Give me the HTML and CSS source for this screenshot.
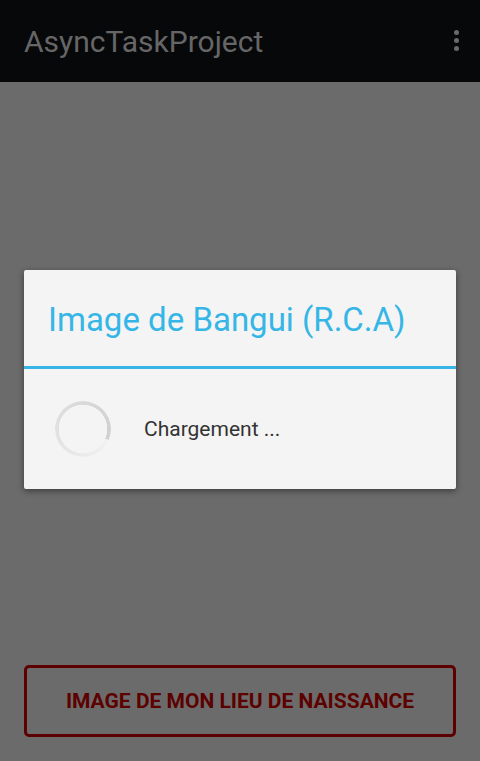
FILE: index.html
```html
<!DOCTYPE html>
<html>
<head>
<meta charset="utf-8">
<link rel="stylesheet" href="styles.css">
</head>
<body>
<div class="screen">
  <header class="actionbar">
    <span class="app-title">AsyncTaskProject</span>
    <span class="overflow"><i></i><i></i><i></i></span>
  </header>
  <main class="content">
    <div class="dialog">
      <div class="dialog-title">Image de Bangui (R.C.A)</div>
      <div class="dialog-divider"></div>
      <div class="dialog-body">
        <div class="spinner-box"><div class="spinner"></div></div>
        <span class="message">Chargement ...</span>
      </div>
    </div>
    <button class="btn">IMAGE DE MON LIEU DE NAISSANCE</button>
  </main>
</div>
</body>
</html>
```
FILE: styles.css
```css
html, body {
  margin: 0;
  padding: 0;
}
body {
  width: 480px;
  height: 761px;
  overflow: hidden;
  font-family: Roboto, "Liberation Sans", sans-serif;
  background: #6b6b6b;
}
.screen {
  display: flex;
  flex-direction: column;
  height: 761px;
}
.actionbar {
  height: 82px;
  background: #07080a;
  display: flex;
  align-items: center;
  justify-content: space-between;
  padding: 0 25px 0 24px;
  box-sizing: border-box;
}
.app-title {
  color: #666666;
  font-size: 30px;
}
.overflow {
  display: flex;
  flex-direction: column;
  gap: 3px;
  margin-right: -4px;
  margin-top: -2px;
}
.overflow i {
  display: block;
  width: 5px;
  height: 5px;
  border-radius: 50%;
  background: #6a6a6a;
}
.content {
  flex: 1;
  display: flex;
  flex-direction: column;
  padding: 188px 24px 0 24px;
}
.dialog {
  background: #f4f4f4;
  border-radius: 2px;
  box-shadow: 0 2px 6px rgba(0,0,0,0.45);
  height: 219px;
}
.dialog-title {
  height: 96px;
  box-sizing: border-box;
  padding: 31px 0 0 24px;
  color: #35b6e6;
  font-size: 33px;
  line-height: 38px;
}
.dialog-divider {
  height: 3px;
  background: #35b6e6;
}
.dialog-body {
  display: flex;
  align-items: center;
  padding: 30px 0 0 29px;
}
.spinner-box {
  width: 60px;
  height: 60px;
  display: flex;
  align-items: center;
  justify-content: center;
}
.spinner {
  width: 56px;
  height: 56px;
  border-radius: 50%;
  background: conic-gradient(from 113deg, rgba(200,200,200,0.05) 0deg, #e4e4e4 120deg, #cfcfcf 360deg);
  -webkit-mask: radial-gradient(farthest-side, transparent calc(100% - 4px), #000 calc(100% - 3.5px));
  mask: radial-gradient(farthest-side, transparent calc(100% - 4px), #000 calc(100% - 3.5px));
}
.message {
  margin-left: 31px;
  font-size: 21px;
  color: #333333;
}
.btn {
  margin-top: 176px;
  height: 72px;
  background: transparent;
  border: 3px solid #5c0000;
  border-radius: 5px;
  color: #5c0000;
  font-family: Roboto, "Liberation Sans", sans-serif;
  font-weight: bold;
  font-size: 21px;
  padding: 0;
}
```
